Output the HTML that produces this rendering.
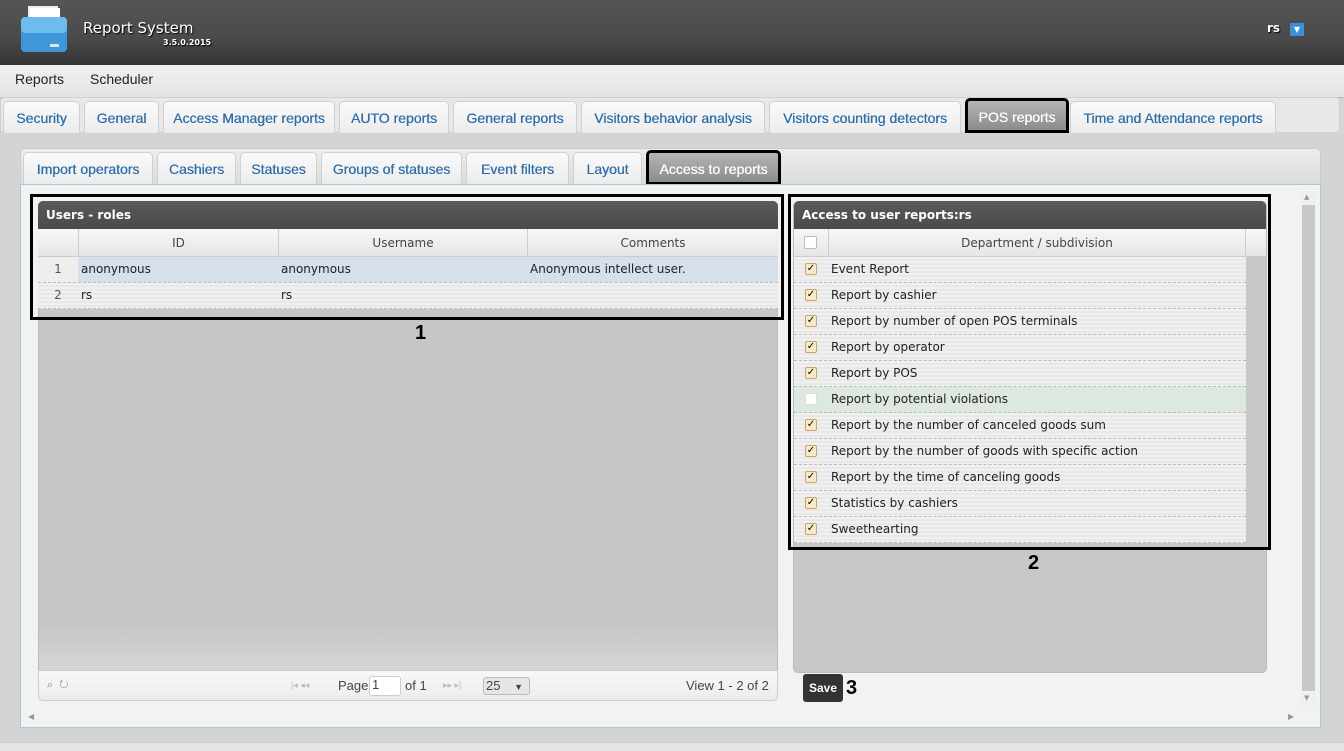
<!DOCTYPE html>
<html><head><meta charset="utf-8"><style>
*{box-sizing:border-box;margin:0;padding:0}
body{width:1344px;height:751px;overflow:hidden;background:#d4d4d4;font-family:"DejaVu Sans","Liberation Sans",sans-serif;position:relative;font-size:12px;color:#222}
.a{position:absolute}
#hdr{left:0;top:0;width:1344px;height:65px;background:linear-gradient(#555,#4a4a4a 60%,#333)}
#menu{left:0;top:65px;width:1344px;height:33px;background:linear-gradient(#f0f0f0,#e4e4e4);border-bottom:1px solid #bbb;font-family:"Liberation Sans",sans-serif;font-size:14px}
.tab{position:absolute;top:101px;height:32px;background:linear-gradient(#fafafa,#ececec);border:1px solid #d0d0d0;border-bottom:none;border-radius:5px 5px 0 0;color:#2e6fa8;font-size:14px;font-family:"Liberation Sans",sans-serif;text-align:center;line-height:32px;white-space:nowrap;overflow:hidden;text-shadow:0.3px 0 0 #2e6fa8}
.it{top:152px;height:32px}
.sel{background:linear-gradient(#b5b5b5,#8c8c8c);color:#fff;border:3px solid #000;line-height:28px;text-shadow:0.3px 0 0 #fff}
.gt{background:linear-gradient(#5a5a5a,#4a4a4a);color:#fff;font-weight:bold;font-size:12px;line-height:28px;padding-left:8px;border-radius:5px 5px 0 0}
.hr{background:linear-gradient(#f6f6f6,#e6e6e6);border-bottom:1px solid #ccc;color:#444}
.row{height:26px;border-bottom:1px dashed #bbb;background:repeating-linear-gradient(#f0f0f0 0,#f0f0f0 2px,#e8e8e8 2px,#e8e8e8 4px);line-height:25px}
.cb{position:absolute;left:11px;top:6px;width:12px;height:12px;border:1px solid #c9a56a;background:#f8e9c8;border-radius:2px;font-size:10px;line-height:10px;text-align:center;color:#000;font-weight:bold}
.box{position:absolute;border:3px solid #000}
.num{position:absolute;font-family:"Liberation Sans",sans-serif;font-weight:bold;font-size:20px;color:#000}
</style></head><body>
<div id="hdr" class="a">
 <svg class="a" style="left:20px;top:6px" width="48" height="47" viewBox="0 0 48 47">
  <rect x="8" y="0" width="30" height="12" fill="#eee"/>
  <rect x="10" y="2" width="30" height="10" fill="#fff"/>
  <rect x="1" y="11" width="46" height="35" rx="4" fill="#3d97d8"/>
  <rect x="1" y="11" width="46" height="16" rx="4" fill="#6cbcf0"/>
  <rect x="30" y="38" width="9" height="3" fill="#cfe9fb"/>
 </svg>
 <div class="a" style="left:83px;top:19px;color:#fff;font-size:15px;font-family:'DejaVu Sans',sans-serif;text-shadow:1px 1px 1px #000">Report System</div>
 <div class="a" style="left:163px;top:38px;color:#fff;font-size:8px;font-weight:bold;text-shadow:1px 1px 1px #000">3.5.0.2015</div>
 <div class="a" style="left:1267px;top:21px;color:#fff;font-size:12px;font-weight:bold;text-shadow:1px 1px 1px #000">rs</div>
 <div class="a" style="left:1290px;top:23px;width:14px;height:13px;background:#3b8fdc;color:#fff;font-size:8px;text-align:center;line-height:13px">▼</div>
</div>
<div id="menu" class="a"><span class="a" style="left:15px;top:6px">Reports</span><span class="a" style="left:90px;top:6px">Scheduler</span></div>
<div class="a" style="left:0;top:97px;width:1340px;height:36px;background:#e8e8e8;border:1px solid #d0d0d0;border-radius:4px"></div>
<div class="tab" style="left:3px;width:77px">Security</div>
<div class="tab" style="left:84px;width:75px">General</div>
<div class="tab" style="left:163px;width:172px">Access Manager reports</div>
<div class="tab" style="left:339px;width:110px">AUTO reports</div>
<div class="tab" style="left:453px;width:124px">General reports</div>
<div class="tab" style="left:581px;width:184px">Visitors behavior analysis</div>
<div class="tab" style="left:769px;width:192px">Visitors counting detectors</div>
<div class="tab sel" style="left:965px;top:98px;width:104px;height:35px;line-height:33px">POS reports</div>
<div class="tab" style="left:1070px;width:206px">Time and Attendance reports</div>

<div class="a" style="left:20px;top:148px;width:1301px;height:37px;background:linear-gradient(#ececec,#dcdcdc);border:1px solid #ccc;border-radius:5px 5px 0 0"></div>
<div class="tab it" style="left:23px;width:130px">Import operators</div>
<div class="tab it" style="left:157px;width:79px">Cashiers</div>
<div class="tab it" style="left:240px;width:77px">Statuses</div>
<div class="tab it" style="left:321px;width:141px">Groups of statuses</div>
<div class="tab it" style="left:466px;width:103px">Event filters</div>
<div class="tab it" style="left:573px;width:69px">Layout</div>
<div class="tab it sel" style="left:646px;top:150px;width:135px;height:35px;line-height:32px">Access to reports</div>

<div class="a" style="left:20px;top:184px;width:1301px;height:544px;background:#f2f2f2;border:1px solid #a6c9e2"></div>
<div class="a" style="left:1300px;top:191px;width:16px;height:519px;background:#f0f0f0"></div>
<div class="a" style="left:1302px;top:205px;width:13px;height:486px;background:#c8c8c8"></div>
<div class="a" style="left:1304px;top:193px;font-size:7px;color:#999">▲</div>
<div class="a" style="left:1304px;top:694px;font-size:7px;color:#999">▼</div>
<div class="a" style="left:28px;top:712px;font-size:8px;color:#999">◀</div>
<div class="a" style="left:1288px;top:712px;font-size:8px;color:#999">▶</div>

<!-- left grid -->
<div class="a" style="left:38px;top:201px;width:740px;height:500px;background:linear-gradient(#c6c6c6,#c6c6c6 85%,#e0e0e0);border:1px solid #bbb;border-radius:5px"></div>
<div class="a gt" style="left:38px;top:201px;width:740px;height:28px">Users - roles</div>
<div class="a hr" style="left:38px;top:229px;width:740px;height:28px;font-size:12px;line-height:28px">
 <span class="a" style="left:40px;top:0;width:200px;height:28px;border-left:1px solid #ccc;text-align:center">ID</span>
 <span class="a" style="left:240px;top:0;width:249px;height:28px;border-left:1px solid #ccc;text-align:center">Username</span>
 <span class="a" style="left:489px;top:0;width:251px;height:28px;border-left:1px solid #ccc;text-align:center">Comments</span>
</div>
<div class="a row" style="left:38px;top:257px;width:740px;background:#eee">
 <span class="a" style="left:0;width:40px;text-align:center;color:#555">1</span>
 <span class="a" style="left:40px;width:700px;height:25px;background:#d5e0ec"></span>
 <span class="a" style="left:43px">anonymous</span><span class="a" style="left:243px">anonymous</span><span class="a" style="left:492px">Anonymous intellect user.</span>
</div>
<div class="a row" style="left:38px;top:283px;width:740px">
 <span class="a" style="left:0;width:40px;text-align:center;color:#555">2</span>
 <span class="a" style="left:43px">rs</span><span class="a" style="left:243px">rs</span>
</div>
<div class="a" style="left:38px;top:670px;width:740px;height:31px;background:linear-gradient(#f8f8f8,#ececec);border:1px solid #ccc;border-radius:0 0 5px 5px;font-family:'Liberation Sans',sans-serif;font-size:13px;color:#444">
 <span class="a" style="left:8px;top:8px;color:#888;font-size:11px">⌕ &nbsp;↻</span>
 <span class="a" style="left:252px;top:9px;color:#bbb;font-size:9px">|◂ ◂◂</span>
 <span class="a" style="left:299px;top:7px">Page</span>
 <span class="a" style="left:330px;top:5px;width:32px;height:20px;background:#fff;border:1px solid #ccc;border-radius:3px;padding-left:2px">1</span>
 <span class="a" style="left:366px;top:7px">of 1</span>
 <span class="a" style="left:404px;top:9px;color:#bbb;font-size:9px">▸▸ ▸|</span>
 <span class="a" style="left:444px;top:6px;width:47px;height:18px;background:#e6e6e6;border:1px solid #bbb;border-radius:3px;padding-left:2px;line-height:16px">25 <span style="font-size:9px;margin-left:10px">▼</span></span>
 <span class="a" style="left:647px;top:7px">View 1 - 2 of 2</span>
</div>

<!-- right grid -->
<div class="a" style="left:793px;top:201px;width:474px;height:472px;background:#c8c8c8;border:1px solid #bbb;border-radius:5px"></div>
<div class="a gt" style="left:794px;top:201px;width:472px;height:28px">Access to user reports:rs</div>
<div class="a hr" style="left:794px;top:229px;width:472px;height:28px;line-height:28px">
 <span class="a" style="left:0;top:0;width:34px;height:28px"><span class="a" style="left:10px;top:7px;width:13px;height:13px;background:#fff;border:1px solid #bbb;border-radius:2px"></span></span>
 <span class="a" style="left:34px;top:0;width:418px;height:28px;border-left:1px solid #ccc;border-right:1px solid #ccc;text-align:center">Department / subdivision</span>
</div>
<div class="a" style="left:794px;top:257px;width:452px;font-family:'DejaVu Sans',sans-serif">
 <div class="row" style="position:relative"><span class="cb">✓</span><span style="margin-left:37px">Event Report</span></div>
 <div class="row" style="position:relative"><span class="cb">✓</span><span style="margin-left:37px">Report by cashier</span></div>
 <div class="row" style="position:relative"><span class="cb">✓</span><span style="margin-left:37px">Report by number of open POS terminals</span></div>
 <div class="row" style="position:relative"><span class="cb">✓</span><span style="margin-left:37px">Report by operator</span></div>
 <div class="row" style="position:relative"><span class="cb">✓</span><span style="margin-left:37px">Report by POS</span></div>
 <div class="row" style="position:relative;background:#dde8de"><span class="cb" style="background:#fff;border-color:#ddd"></span><span style="margin-left:37px">Report by potential violations</span></div>
 <div class="row" style="position:relative"><span class="cb">✓</span><span style="margin-left:37px">Report by the number of canceled goods sum</span></div>
 <div class="row" style="position:relative"><span class="cb">✓</span><span style="margin-left:37px">Report by the number of goods with specific action</span></div>
 <div class="row" style="position:relative"><span class="cb">✓</span><span style="margin-left:37px">Report by the time of canceling goods</span></div>
 <div class="row" style="position:relative"><span class="cb">✓</span><span style="margin-left:37px">Statistics by cashiers</span></div>
 <div class="row" style="position:relative"><span class="cb">✓</span><span style="margin-left:37px">Sweethearting</span></div>
</div>
<div class="a" style="left:1246px;top:257px;width:20px;height:286px;background:#c8c8c8"></div>

<div class="a" style="left:803px;top:674px;width:40px;height:28px;background:#333;border-radius:3px;color:#fff;font-weight:bold;font-size:12px;font-family:'Liberation Sans',sans-serif;text-align:center;line-height:28px">Save</div>

<div class="box" style="left:30px;top:194px;width:754px;height:126px"></div>
<div class="box" style="left:788px;top:194px;width:483px;height:356px"></div>
<div class="num" style="left:415px;top:322px">1</div>
<div class="num" style="left:1028px;top:552px">2</div>
<div class="num" style="left:846px;top:677px">3</div>
<div class="a" style="left:0;top:742px;width:1344px;height:9px;background:#e6e6e6;border-top:1px solid #ccc"></div>
</body></html>
